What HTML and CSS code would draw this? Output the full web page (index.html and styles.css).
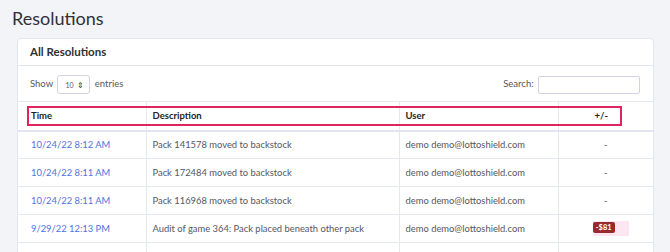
FILE: index.html
```html
<!DOCTYPE html>
<html lang="en">
<head>
    <meta charset="UTF-8">
    <title>Resolutions</title>
    <link rel="stylesheet" href="styles.css">
</head>
<body>
    <h1 class="page-title">Resolutions</h1>
    <div class="card">
        <div class="card-header">All Resolutions</div>
        <div class="controls">
            <label class="length">Show
                <span class="select">10 <span class="arrows">&#8661;</span></span>
                entries</label>
            <label class="search">Search: <span class="search-box"></span></label>
        </div>
        <table class="table">
            <thead>
                <tr>
                    <th class="c-time">Time</th>
                    <th class="c-desc">Description</th>
                    <th class="c-user">User</th>
                    <th class="c-amt">+/-</th>
                </tr>
            </thead>
            <tbody>
                <tr>
                    <td class="c-time"><a href="#">10/24/22 8:12 AM</a></td>
                    <td class="c-desc">Pack 141578 moved to backstock</td>
                    <td class="c-user">demo demo@lottoshield.com</td>
                    <td class="c-amt">-</td>
                </tr>
                <tr>
                    <td class="c-time"><a href="#">10/24/22 8:11 AM</a></td>
                    <td class="c-desc">Pack 172484 moved to backstock</td>
                    <td class="c-user">demo demo@lottoshield.com</td>
                    <td class="c-amt">-</td>
                </tr>
                <tr>
                    <td class="c-time"><a href="#">10/24/22 8:11 AM</a></td>
                    <td class="c-desc">Pack 116968 moved to backstock</td>
                    <td class="c-user">demo demo@lottoshield.com</td>
                    <td class="c-amt">-</td>
                </tr>
                <tr>
                    <td class="c-time"><a href="#">9/29/22 12:13 PM</a></td>
                    <td class="c-desc">Audit of game 364: Pack placed beneath other pack</td>
                    <td class="c-user">demo demo@lottoshield.com</td>
                    <td class="c-amt"><span class="badge-wrap"><span class="badge">-$81</span></span></td>
                </tr>
                <tr class="last">
                    <td class="c-time"></td>
                    <td class="c-desc"></td>
                    <td class="c-user"></td>
                    <td class="c-amt"></td>
                </tr>
            </tbody>
        </table>
        <div class="highlight"></div>
    </div>
</body>
</html>
```

FILE: styles.css
```css
* {
    box-sizing: border-box;
}

body {
    margin: 0;
    background: #f3f4f7;
    font-family: Lato, sans-serif;
    color: #55575f;
    height: 252px;
    overflow: hidden;
}

.page-title {
    margin: 0;
    padding: 7px 0 0 12px;
    height: 38px;
    font-size: 18px;
    font-weight: 400;
    color: #2f3037;
}

.card {
    position: relative;
    margin-left: 17px;
    width: 637px;
    background: #fff;
    border: 1px solid #e3e6f0;
    border-radius: 4px;
}

.card-header {
    height: 27px;
    padding: 6px 0 0 12px;
    font-size: 11.5px;
    font-weight: 700;
    color: #2f3037;
    border-bottom: 1px solid #e3e6f0;
}

.controls {
    display: flex;
    justify-content: space-between;
    align-items: center;
    height: 35px;
    padding: 2px 13px 0 12px;
    font-size: 9.5px;
}

.select {
    display: inline-flex;
    align-items: center;
    justify-content: space-between;
    width: 33px;
    height: 19px;
    margin: 0 2px;
    padding: 0 5px 0 7px;
    font-size: 7px;
    border: 1px solid #d1d3e2;
    border-radius: 3px;
    vertical-align: middle;
}

.arrows {
    font-size: 8px;
    color: #333;
}

.search-box {
    display: inline-block;
    width: 102px;
    height: 18px;
    margin-left: 2px;
    border: 1px solid #d1d3e2;
    border-radius: 2px;
    vertical-align: middle;
}

.table {
    width: 100%;
    border-collapse: collapse;
    font-size: 9.4px;
    table-layout: fixed;
}

.table th,
.table td {
    height: 28px;
    padding: 0 6px;
    text-align: left;
    border: 1px solid #e6e8ef;
    white-space: nowrap;
    overflow: hidden;
}

.table tr > :first-child {
    border-left: none;
}

.table tr > :last-child {
    border-right: none;
}

.table tr.last td {
    height: 12px;
}

.table th {
    height: 29px;
    font-size: 9.5px;
    color: #1e1f24;
    font-weight: 700;
    border-bottom: 2px solid #e3e6f0;
}

.c-time { width: 128px; padding-left: 13px !important; }
.c-desc { width: 253px; }
.c-user { width: 159px; }
.c-amt { text-align: center !important; }

.table th.c-amt {
    text-align: right !important;
    padding-right: 45px;
}

.table a {
    color: #4e73df;
    text-decoration: none;
}

.badge-wrap {
    display: inline-block;
    padding: 0 14px 3px 0;
    background: #fde6f1;
    margin-left: 10px;
}

.badge {
    display: inline-block;
    padding: 1px 3px;
    font-size: 7.5px;
    font-weight: 700;
    color: #fff;
    background: #962a2c;
    border-radius: 2px;
}

.highlight {
    position: absolute;
    left: 9px;
    top: 67px;
    width: 595px;
    height: 20px;
    border: 2px solid #e0245e;
}
```
